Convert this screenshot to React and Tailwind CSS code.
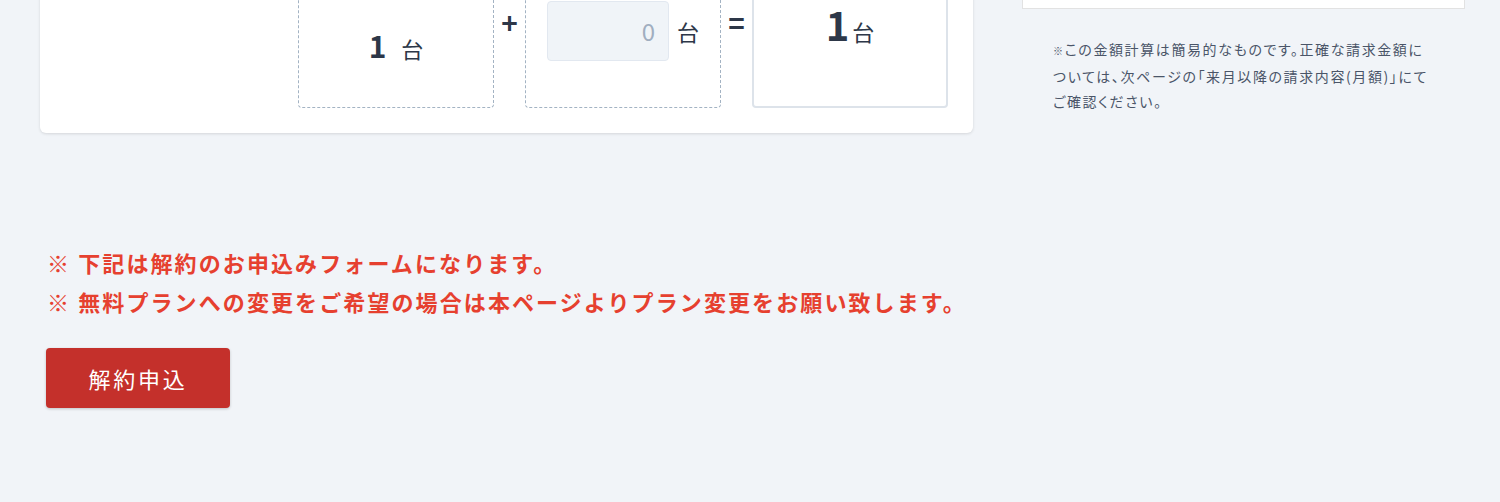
const font = { fontFamily: '"Noto Sans CJK JP", "Noto Sans", sans-serif' };

const UnitBox = ({ children, className = "" }) => (
  <div className={`w-[196px] h-[128px] flex-none rounded ${className}`}>{children}</div>
);

const Operator = ({ children }) => (
  <div className="w-[31px] flex-none text-center text-[28px] font-bold leading-none text-[#2d3748] pt-[28px]">
    {children}
  </div>
);

export default function App() {
  return (
    <div
      className="min-h-screen bg-[#f1f4f8] text-[#2d3748] overflow-hidden"
      style={font}
    >
      <div className="flex items-start pl-[40px] -mt-[45px]">
        {/* Device count card */}
        <div className="w-[933px] flex-none bg-white rounded-md shadow-[0_1px_3px_rgba(0,0,0,0.12)] pt-[25px] pb-[25px] pl-[258px] pr-[25px]">
          <div className="flex items-start">
            <UnitBox className="border border-dashed border-[#a3b3c3] flex items-center justify-center">
              <div className="flex items-baseline gap-[15px] pt-[2px]">
                <span className="text-[30px] font-bold">1</span>
                <span className="text-[22px]">台</span>
              </div>
            </UnitBox>
            <Operator>+</Operator>
            <UnitBox className="border border-dashed border-[#a3b3c3] pt-[20px] pl-[21px]">
              <div className="flex items-center">
                <div className="w-[122px] h-[60px] rounded bg-[#f0f4f8] border border-[#e2e8f0] flex items-center justify-end pr-[13px] text-[24px] text-[#a0aec0]">
                  0
                </div>
                <span className="ml-[8px] text-[22px]">台</span>
              </div>
            </UnitBox>
            <Operator>=</Operator>
            <UnitBox className="border-2 border-[#dde3ea] flex justify-center pt-[20px]">
              <div className="flex items-baseline gap-[3px]">
                <span className="text-[40px] font-bold leading-[44px]">1</span>
                <span className="text-[22px]">台</span>
              </div>
            </UnitBox>
          </div>
        </div>

        {/* Price summary column */}
        <div className="w-[443px] flex-none ml-[49px]">
          <div className="h-[54px] bg-white border border-[#e2e2e2]" />
          <p className="mt-[28px] pl-[31px] text-[14px] leading-[25.5px] tracking-[1.6px] text-[#4a5568] [font-feature-settings:'palt']">
            <span className="text-[10px]">※</span>この金額計算は簡易的なものです。正確な請求金額に
            <br />
            ついては、次ページの「来月以降の請求内容(月額)」にて
            <br />
            ご確認ください。
          </p>
        </div>
      </div>

      {/* Cancellation notice */}
      <div className="pl-[47px] mt-[110px]">
        <p className="text-[22px] font-bold leading-[39px] tracking-[2.1px] text-[#e6402f]">
          ※ 下記は解約のお申込みフォームになります。
        </p>
        <p className="text-[22px] font-bold leading-[39px] tracking-[2.1px] text-[#e6402f]">
          ※ 無料プランへの変更をご希望の場合は本ページよりプラン変更をお願い致します。
        </p>
        <button className="mt-[27px] -ml-px w-[184px] h-[60px] rounded bg-[#c4302b] text-white text-[22px] tracking-[2.8px] shadow-[0_1px_3px_rgba(0,0,0,0.2)]">
          解約申込
        </button>
      </div>
    </div>
  );
}
